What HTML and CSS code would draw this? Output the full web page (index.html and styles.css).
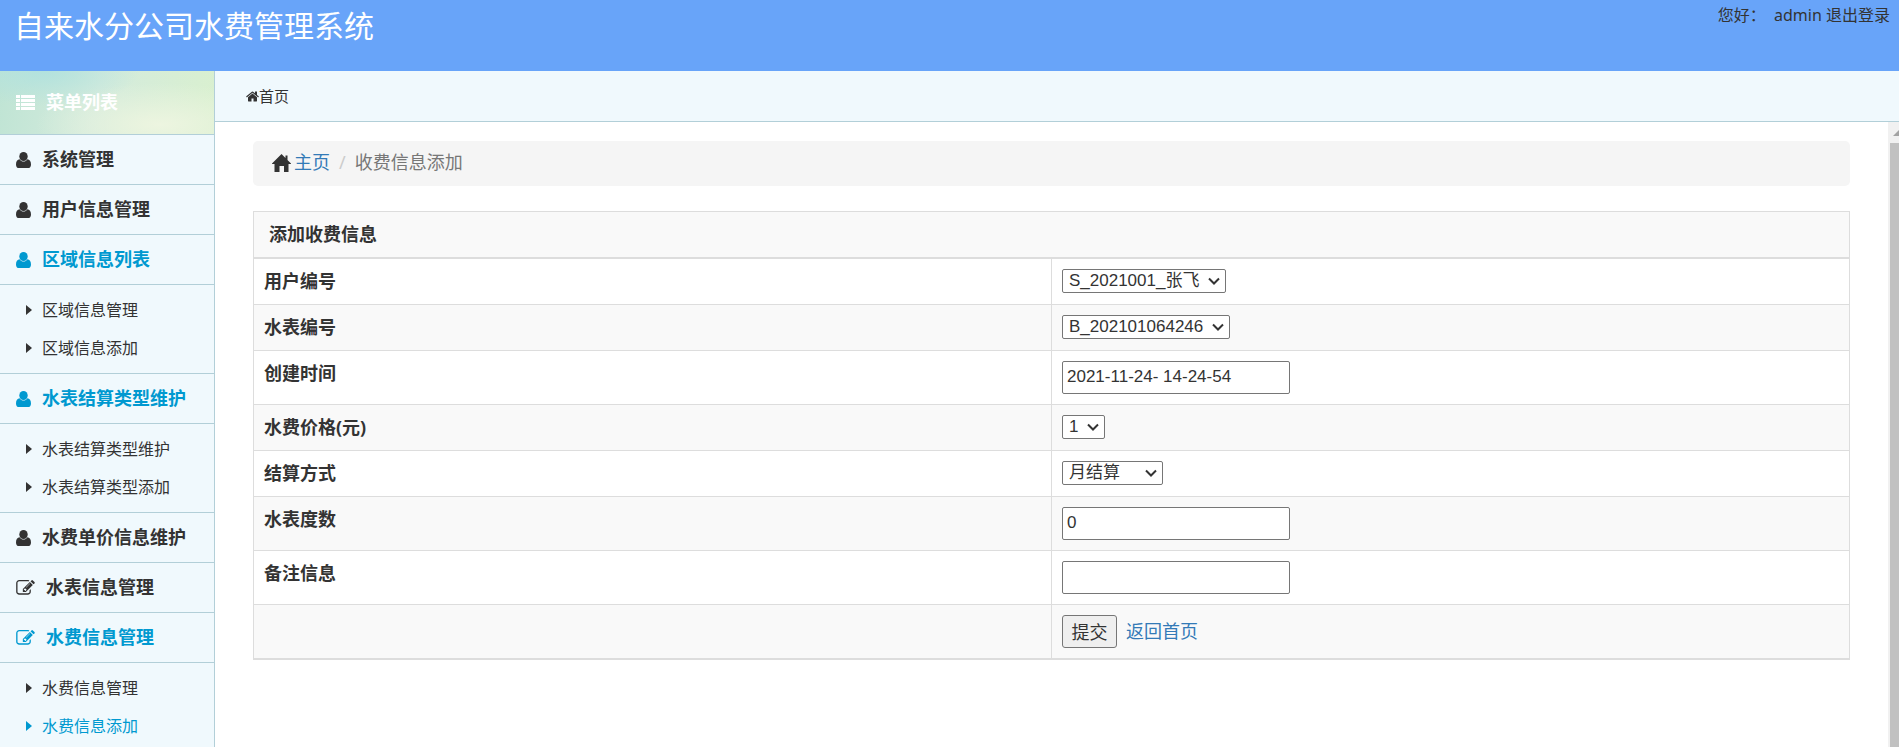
FILE: index.html
```
<!DOCTYPE html>
<html lang="zh-CN">
<head>
  <meta charset="utf-8">
  <title>自来水分公司水费管理系统</title>
  <link rel="stylesheet" href="styles.css">
</head>
<body>
  <svg class="sprite" aria-hidden="true">
    <symbol id="icon-user" viewBox="0 0 15 16">
      <ellipse cx="7.5" cy="4.5" rx="4.2" ry="4.5"/>
      <path d="M0 12.4c0-3 1.4-5 3.6-5.1 1 1.5 2.4 2.3 3.9 2.3s2.900-.8 3.900-2.300C13.600 7.400 15 9.400 15 12.400 15 14.800 13.800 16 12 16H3C1.200 16 0 14.800 0 12.400z"/>
    </symbol>
    <symbol id="icon-edit" viewBox="0 128 1792 1536">
      <path d="M888 1184l116-116-152-152-116 116v56h96v96h56zm440-720q-16-16-33 1l-350 350q-17 17-1 33t33-1l350-350q17-17 1-33zm80 594v190q0 119-84.5 203.5t-203.5 84.5h-832q-119 0-203.5-84.5t-84.5-203.5v-832q0-119 84.5-203.5t203.5-84.5h832q63 0 117 25 15 7 18 23 3 17-9 29l-49 49q-14 14-32 8-23-6-45-6h-832q-66 0-113 47t-47 113v832q0 66 47 113t113 47h832q66 0 113-47t47-113v-126q0-13 9-22l64-64q15-15 35-7t20 29zm-96-738l288 288-672 672h-288v-288zm444 132l-92 92-288-288 92-92q28-28 68-28t68 28l152 152q28 28 28 68t-28 68z"/>
    </symbol>
    <symbol id="icon-caret" viewBox="0 0 6 10">
      <path d="M0 0l6 5-6 5z"/>
    </symbol>
  </svg>

  <div class="header">
    <h1>自来水分公司水费管理系统</h1>
    <div class="user">您好： &nbsp;admin <a href="#">退出登录</a></div>
  </div>

  <div class="main">
    <div class="sidebar">
      <div class="menu-title">
        <svg class="icon-list" viewBox="0 0 19 16"><path d="M0 0h4v3H0zM5 0h14v3H5zM0 4h4v3H0zM5 4h14v3H5zM0 8h4v3H0zM5 8h14v3H5zM0 12h4v3H0zM5 12h14v3H5z"/></svg>
        菜单列表
      </div>
      <a class="menu-item" href="#"><svg class="icon-user"><use href="#icon-user"/></svg>系统管理</a>
      <a class="menu-item" href="#"><svg class="icon-user"><use href="#icon-user"/></svg>用户信息管理</a>
      <a class="menu-item active" href="#"><svg class="icon-user"><use href="#icon-user"/></svg>区域信息列表</a>
      <ul class="submenu">
        <li><a href="#"><svg class="icon-caret"><use href="#icon-caret"/></svg>区域信息管理</a></li>
        <li><a href="#"><svg class="icon-caret"><use href="#icon-caret"/></svg>区域信息添加</a></li>
      </ul>
      <a class="menu-item active" href="#"><svg class="icon-user"><use href="#icon-user"/></svg>水表结算类型维护</a>
      <ul class="submenu">
        <li><a href="#"><svg class="icon-caret"><use href="#icon-caret"/></svg>水表结算类型维护</a></li>
        <li><a href="#"><svg class="icon-caret"><use href="#icon-caret"/></svg>水表结算类型添加</a></li>
      </ul>
      <a class="menu-item" href="#"><svg class="icon-user"><use href="#icon-user"/></svg>水费单价信息维护</a>
      <a class="menu-item" href="#"><svg class="icon-edit"><use href="#icon-edit"/></svg>水表信息管理</a>
      <a class="menu-item active" href="#"><svg class="icon-edit"><use href="#icon-edit"/></svg>水费信息管理</a>
      <ul class="submenu">
        <li><a href="#"><svg class="icon-caret"><use href="#icon-caret"/></svg>水费信息管理</a></li>
        <li><a class="active" href="#"><svg class="icon-caret"><use href="#icon-caret"/></svg>水费信息添加</a></li>
      </ul>
    </div>

    <div class="right">
      <div class="topbar">
        <svg class="icon-home" viewBox="64 256 1664 1280"><path d="M1472 992v480q0 26-19 45t-45 19h-384v-384h-256v384h-384q-26 0-45-19t-19-45v-480q0-1 .5-3t.5-3l575-474 575 474q1 2 1 6zm223-69l-62 74q-8 9-21 11h-3q-13 0-21-7l-692-577-692 577q-12 8-24 7-13-2-21-11l-62-74q-8-10-7-23.5t11-21.5l719-599q32-26 76-26t76 26l244 204v-195q0-14 9-23t23-9h192q14 0 23 9t9 23v408l219 182q10 8 11 21.5t-7 23.5z"/></svg>
        <a href="#">首页</a>
      </div>

      <div class="frame">
        <div class="content">
          <div class="breadcrumb">
            <svg class="icon-house" viewBox="0 0 19 18"><path d="M9.500 0L13.500 4V1.500h2V6L19 9.500V10h-2.500v8H12v-6H7.500v6H2.500v-8H0v-.5z"/></svg>
            <a href="#">主页</a>
            <span class="slash">/</span>
            <span class="current">收费信息添加</span>
          </div>

          <form>
            <table class="table">
              <thead>
                <tr><th colspan="2">添加收费信息</th></tr>
              </thead>
              <tbody>
                <tr>
                  <td><label for="userId">用户编号</label></td>
                  <td><select id="userId"><option>S_2021001_张飞</option></select></td>
                </tr>
                <tr>
                  <td><label for="meterId">水表编号</label></td>
                  <td><select id="meterId"><option>B_202101064246</option></select></td>
                </tr>
                <tr>
                  <td><label for="createTime">创建时间</label></td>
                  <td><input type="text" id="createTime" value="2021-11-24- 14-24-54"></td>
                </tr>
                <tr>
                  <td><label for="price">水费价格(元)</label></td>
                  <td><select id="price"><option>1</option></select></td>
                </tr>
                <tr>
                  <td><label for="payType">结算方式</label></td>
                  <td><select id="payType"><option>月结算</option><option>季度结算</option></select></td>
                </tr>
                <tr>
                  <td><label for="degree">水表度数</label></td>
                  <td><input type="text" id="degree" value="0"></td>
                </tr>
                <tr>
                  <td><label for="remark">备注信息</label></td>
                  <td><input type="text" id="remark"></td>
                </tr>
                <tr>
                  <td></td>
                  <td><button type="submit">提交</button><a class="back" href="#">返回首页</a></td>
                </tr>
              </tbody>
            </table>
          </form>
        </div>

        <div class="scrollbar">
          <svg class="arrow" viewBox="0 0 12 6"><path d="M6 0l6 6H0z"/></svg>
          <div class="thumb"></div>
        </div>
      </div>
    </div>
  </div>
</body>
</html>
```
FILE: styles.css
```
* {
  box-sizing: border-box;
}

body {
  margin: 0;
  height: 100vh;
  display: flex;
  flex-direction: column;
  overflow: hidden;
  font-family: "Noto Sans", "Noto Sans CJK SC", sans-serif;
  font-size: 18px;
  line-height: 25px;
  color: #333;
}

a {
  color: #337ab7;
  text-decoration: none;
}

svg {
  fill: currentColor;
  flex-shrink: 0;
}

.sprite {
  display: none;
}

/* header */
.header {
  display: flex;
  justify-content: space-between;
  flex-shrink: 0;
  height: 71px;
  padding: 3px 9px 0 14px;
  background: #68a4f9;
}

.header h1 {
  margin: 0;
  font-size: 30px;
  font-weight: normal;
  line-height: 46px;
  color: #fff;
}

.user {
  font-size: 16px;
}

.user a {
  color: #333;
}

.main {
  display: flex;
  flex: 1;
  min-height: 0;
}

/* sidebar */
.sidebar {
  width: 215px;
  flex-shrink: 0;
  overflow: hidden;
  background: #f0f9fd;
  border-right: 1px solid #b2cfd8;
}

.menu-title {
  display: flex;
  align-items: center;
  gap: 11px;
  height: 64px;
  padding-left: 16px;
  border-bottom: 1px solid #b2cfd8;
  background:
    radial-gradient(ellipse at 20% 0, #b2e2de, transparent 40%),
    radial-gradient(ellipse at 75% 85%, #edf5e0, transparent 55%),
    linear-gradient(100deg, #bfe4d4, #d4ebdd 45%, #d9f0cf);
  color: #fff;
  font-weight: bold;
}

.menu-item {
  display: flex;
  align-items: center;
  gap: 11px;
  height: 50px;
  padding-left: 16px;
  border-bottom: 1px solid #b2cfd8;
  color: #333;
  font-weight: bold;
}

.submenu {
  margin: 0;
  padding: 6px 0;
  list-style: none;
  border-bottom: 1px solid #b2cfd8;
}

.submenu a {
  display: flex;
  align-items: center;
  gap: 10px;
  height: 38px;
  padding-left: 26px;
  font-size: 16px;
  color: #333;
}

.menu-item.active,
.submenu a.active {
  color: #0099d0;
}

.icon-list {
  width: 19px;
  height: 16px;
}

.icon-user {
  width: 15px;
  height: 16px;
}

.icon-edit {
  width: 19px;
  height: 16px;
}

.icon-caret {
  width: 6px;
  height: 10px;
}

/* right side */
.right {
  display: flex;
  flex-direction: column;
  flex: 1;
  min-width: 0;
}

.topbar {
  display: flex;
  align-items: center;
  height: 51px;
  padding-left: 31px;
  background: #f0f9fd;
  border-bottom: 1px solid #b2cfd8;
  font-size: 15px;
}

.topbar a {
  color: #333;
}

.icon-home {
  width: 13px;
  height: 11px;
}

.frame {
  display: flex;
  flex: 1;
  min-height: 0;
}

.content {
  flex: 1;
  padding: 19px 38px;
}

.breadcrumb {
  display: flex;
  align-items: center;
  height: 45px;
  margin-bottom: 25px;
  padding: 0 19px 2px;
  background: #f5f5f5;
  border-radius: 5px;
}

.icon-house {
  width: 19px;
  height: 18px;
  margin-right: 3px;
}

.slash {
  padding: 0 9px;
  color: #ccc;
}

.current {
  color: #777;
}

/* form table */
.table {
  width: 100%;
  table-layout: fixed;
  border-collapse: collapse;
  border: 1px solid #ddd;
  border-bottom-width: 2px;
}

.table th {
  height: 46px;
  padding: 0 15px;
  text-align: left;
  background: #f9f9f9;
  border-bottom: 2px solid #ddd;
}

.table td {
  height: 46px;
  padding: 10px;
  border: 1px solid #ddd;
  vertical-align: top;
}

.table tbody tr:nth-child(even) {
  background: #f9f9f9;
}

.table label {
  display: block;
  font-weight: bold;
}

.table input,
.table select,
.table button {
  display: block;
  font-family: "Liberation Sans", "Noto Sans CJK SC", sans-serif;
  font-size: 17px;
  color: #333;
}

.table input {
  width: 228px;
  height: 33px;
  padding: 0 4px;
  border: 1px solid #767676;
  border-radius: 2px;
}

.table select {
  height: 24px;
  padding: 0 25px 0 6px;
  appearance: none;
  background: #fff url("data:image/svg+xml,%3Csvg xmlns='http://www.w3.org/2000/svg' width='12' height='8'%3E%3Cpath d='M1 1.500l5 5 5-5' fill='none' stroke='%23333' stroke-width='2'/%3E%3C/svg%3E") no-repeat right 5px center;
  border: 1px solid #767676;
  border-radius: 2px;
}

.table button {
  display: inline-block;
  width: 55px;
  height: 33px;
  padding: 0;
  background: #efefef;
  border: 1px solid #767676;
  border-radius: 3px;
  font-size: 18px;
  vertical-align: top;
}

.back {
  display: inline-block;
  margin-left: 9px;
  line-height: 32px;
}

/* scrollbar */
.scrollbar {
  display: flex;
  flex-direction: column;
  width: 11px;
  overflow: hidden;
  background: #f1f1f1;
}

.arrow {
  width: 12px;
  height: 6px;
  margin: 8px 0 7px 5px;
  fill: #a3a3a3;
}

.thumb {
  flex: 1;
  margin-left: 2px;
  background: #c1c1c1;
}
```
